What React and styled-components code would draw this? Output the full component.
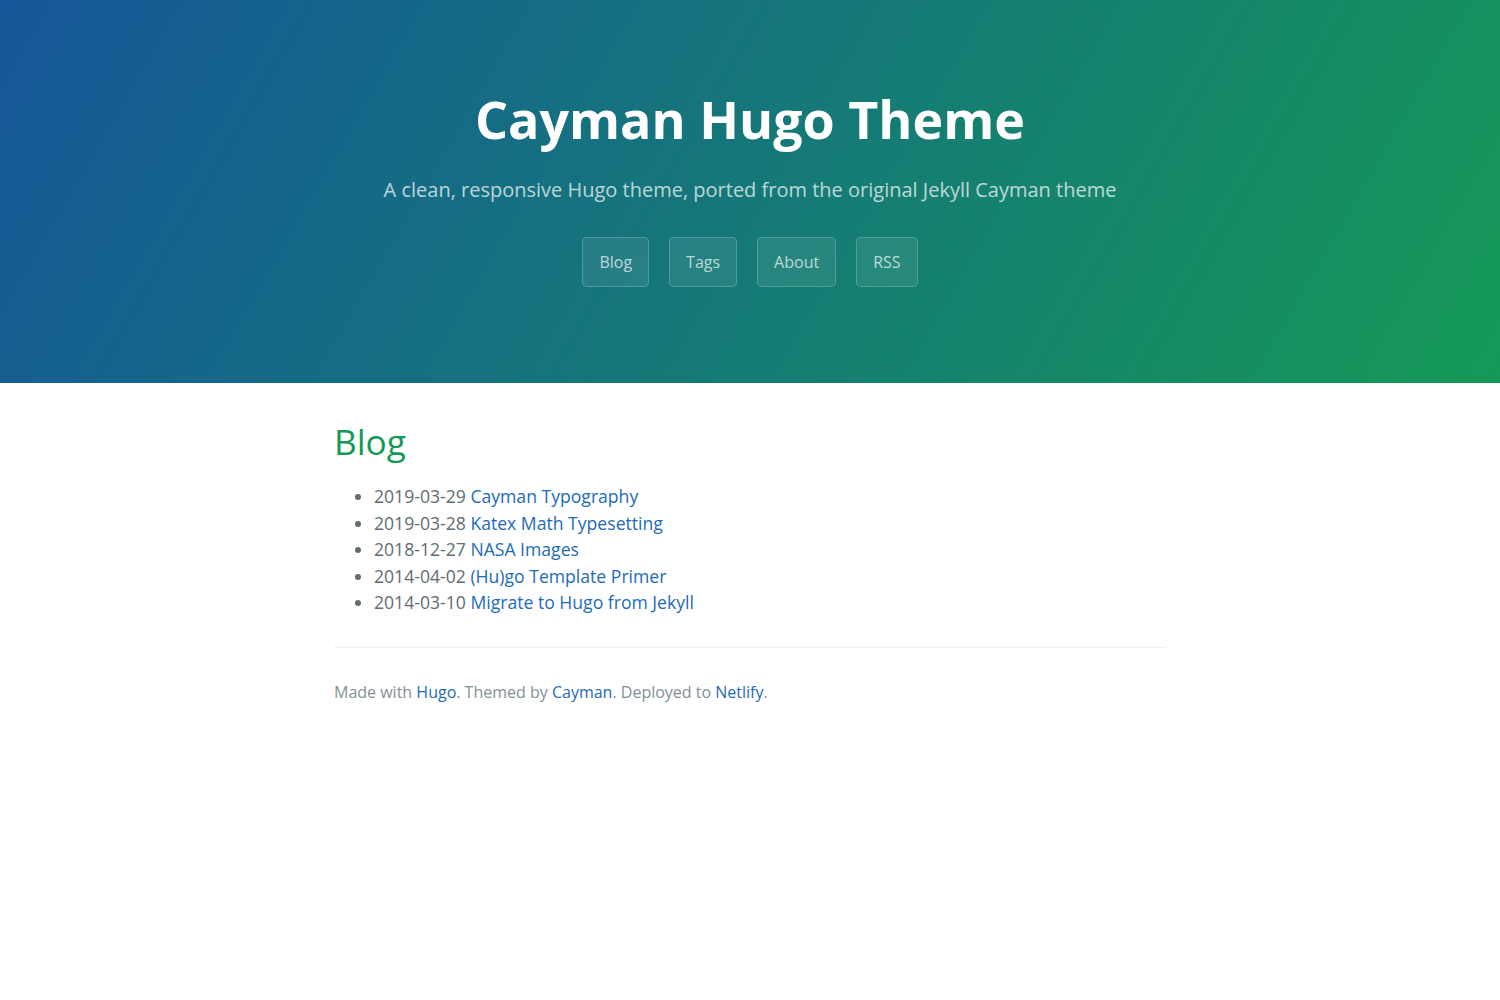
import React from "react";
import styled, { createGlobalStyle } from "styled-components";

const GlobalStyle = createGlobalStyle`
  html, body { margin: 0; padding: 0; }
  body {
    font-family: "Open Sans", "Helvetica Neue", Helvetica, Arial, sans-serif;
    font-size: 16px;
    line-height: 1.5;
    color: #606c71;
    background: #fff;
  }
  * { box-sizing: border-box; }
`;

const PageHeader = styled.section`
  color: #fff;
  text-align: center;
  background-color: #159957;
  background-image: linear-gradient(120deg, #155799, #159957);
  padding: 5rem 6rem;
`;

const ProjectName = styled.h1`
  margin: 0 0 0.1rem;
  font-size: 3.25rem;
  font-weight: 700;
  line-height: 1.5;
`;

const Tagline = styled.h2`
  margin: 16.6px 0 2rem;
  font-size: 1.25rem;
  font-weight: normal;
  line-height: 1.5;
  opacity: 0.7;
`;

const Nav = styled.nav`
  display: flex;
  justify-content: center;
  gap: 20px;
  margin-bottom: 1rem;
`;

const Btn = styled.a`
  display: inline-block;
  color: rgba(255, 255, 255, 0.7);
  background-color: rgba(255, 255, 255, 0.08);
  border: 1px solid rgba(255, 255, 255, 0.2);
  border-radius: 0.3rem;
  padding: 0.75rem 1rem;
  font-size: 1rem;
  line-height: 1.5;
  text-decoration: none;
`;

const Main = styled.section`
  max-width: 64rem;
  margin: 0 auto;
  padding: 2rem 6rem;
  font-size: 1.1rem;
  word-wrap: break-word;
`;

const Heading = styled.h1`
  margin: 0 0 1rem;
  font-size: 2em;
  font-weight: normal;
  line-height: 1.5;
  color: #159957;
`;

const PostList = styled.ul`
  margin: 0 0 2rem;
  padding-left: 40px;
`;

const PostItem = styled.li`
  line-height: 1.5;
`;

const Link = styled.a`
  color: #1e6bb8;
  text-decoration: none;
`;

const Footer = styled.footer`
  padding-top: 2rem;
  border-top: 1px solid #eff0f1;
  font-size: 1rem;
  color: #819198;
`;

const FooterText = styled.span`
  display: block;
  line-height: 1.5;
`;

const posts = [
  ["2019-03-29", "Cayman Typography"],
  ["2019-03-28", "Katex Math Typesetting"],
  ["2018-12-27", "NASA Images"],
  ["2014-04-02", "(Hu)go Template Primer"],
  ["2014-03-10", "Migrate to Hugo from Jekyll"],
];

export default function App() {
  return (
    <>
      <GlobalStyle />
      <PageHeader>
        <ProjectName>Cayman Hugo Theme</ProjectName>
        <Tagline>A clean, responsive Hugo theme, ported from the original Jekyll Cayman theme</Tagline>
        <Nav>
          <Btn href="#">Blog</Btn>
          <Btn href="#">Tags</Btn>
          <Btn href="#">About</Btn>
          <Btn href="#">RSS</Btn>
        </Nav>
      </PageHeader>
      <Main>
        <Heading>Blog</Heading>
        <PostList>
          {posts.map(([d, t]) => (
            <PostItem key={t}>
              {d} <Link href="#">{t}</Link>
            </PostItem>
          ))}
        </PostList>
        <Footer>
          <FooterText>
            Made with <Link href="#">Hugo</Link>. Themed by <Link href="#">Cayman</Link>. Deployed to{" "}
            <Link href="#">Netlify</Link>.
          </FooterText>
        </Footer>
      </Main>
    </>
  );
}
